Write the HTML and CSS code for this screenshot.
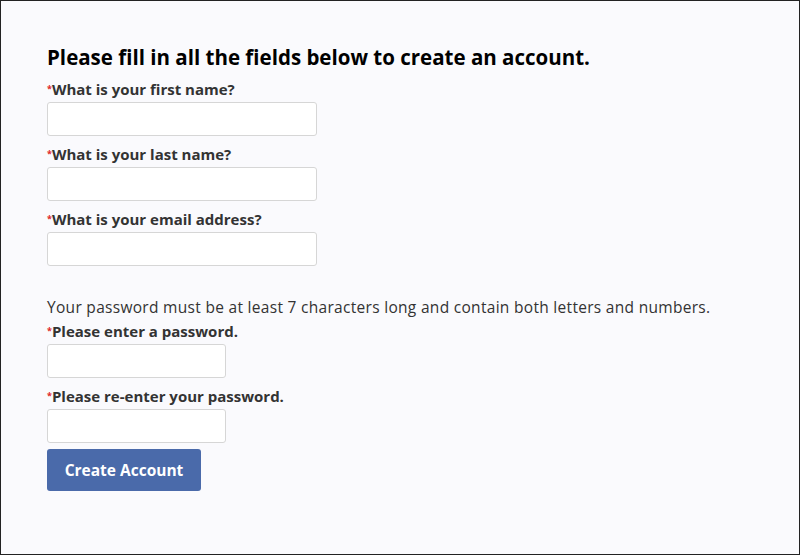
FILE: index.html
```html
<!DOCTYPE html>
<html>
<head>
<meta charset="utf-8">
<link rel="stylesheet" href="styles.css">
</head>
<body>
<div class="frame">
  <form class="form">
    <h1 class="title">Please fill in all the fields below to create an account.</h1>
    <div class="field">
      <label class="label"><span class="req">*</span>What is your first name?</label>
      <input class="input" type="text">
    </div>
    <div class="field">
      <label class="label"><span class="req">*</span>What is your last name?</label>
      <input class="input" type="text">
    </div>
    <div class="field">
      <label class="label"><span class="req">*</span>What is your email address?</label>
      <input class="input" type="text">
    </div>
    <p class="note">Your password must be at least 7 characters long and contain both letters and numbers.</p>
    <div class="field">
      <label class="label"><span class="req">*</span>Please enter a password.</label>
      <input class="input input-short" type="password">
    </div>
    <div class="field">
      <label class="label"><span class="req">*</span>Please re-enter your password.</label>
      <input class="input input-short" type="password">
    </div>
    <button class="btn" type="button">Create Account</button>
  </form>
</div>
</body>
</html>
```

FILE: styles.css
```css
html, body {
  margin: 0;
  padding: 0;
}
body {
  font-family: "Open Sans", "Liberation Sans", sans-serif;
  color: #333;
}
.frame {
  width: 800px;
  height: 555px;
  box-sizing: border-box;
  border: 1px solid #222;
  background: #fafafd;
  padding: 44px 46px;
}
.form {
  display: flex;
  flex-direction: column;
  align-items: flex-start;
}
.title {
  margin: 0 0 10px 0;
  font-size: 20.5px;
  line-height: 24px;
  font-weight: 700;
  color: #000;
}
.field {
  display: flex;
  flex-direction: column;
  align-items: flex-start;
  margin-bottom: 8px;
}
.label {
  display: block;
  font-size: 15px;
  line-height: 20px;
  font-weight: 700;
  color: #333;
  margin-bottom: 3px;
  white-space: nowrap;
}
.req {
  color: #e0262b;
  font-size: 9px;
  line-height: 0;
  vertical-align: 3px;
  margin-right: 0;
}
.input {
  width: 270px;
  height: 34px;
  box-sizing: border-box;
  border: 1px solid #d6d6d6;
  border-radius: 3px;
  background: #fff;
  margin: 0;
}
.input-short {
  width: 179px;
}
.note {
  margin: 23px 0 4px 0;
  font-size: 15.5px;
  line-height: 20px;
  letter-spacing: 0.3px;
  color: #333;
  white-space: nowrap;
}
.btn {
  margin-top: -2px;
  width: 154px;
  height: 42px;
  border: none;
  border-radius: 3px;
  background: #4a6aaa;
  color: #fff;
  font-family: inherit;
  font-size: 15.5px;
  font-weight: 700;
}
```
